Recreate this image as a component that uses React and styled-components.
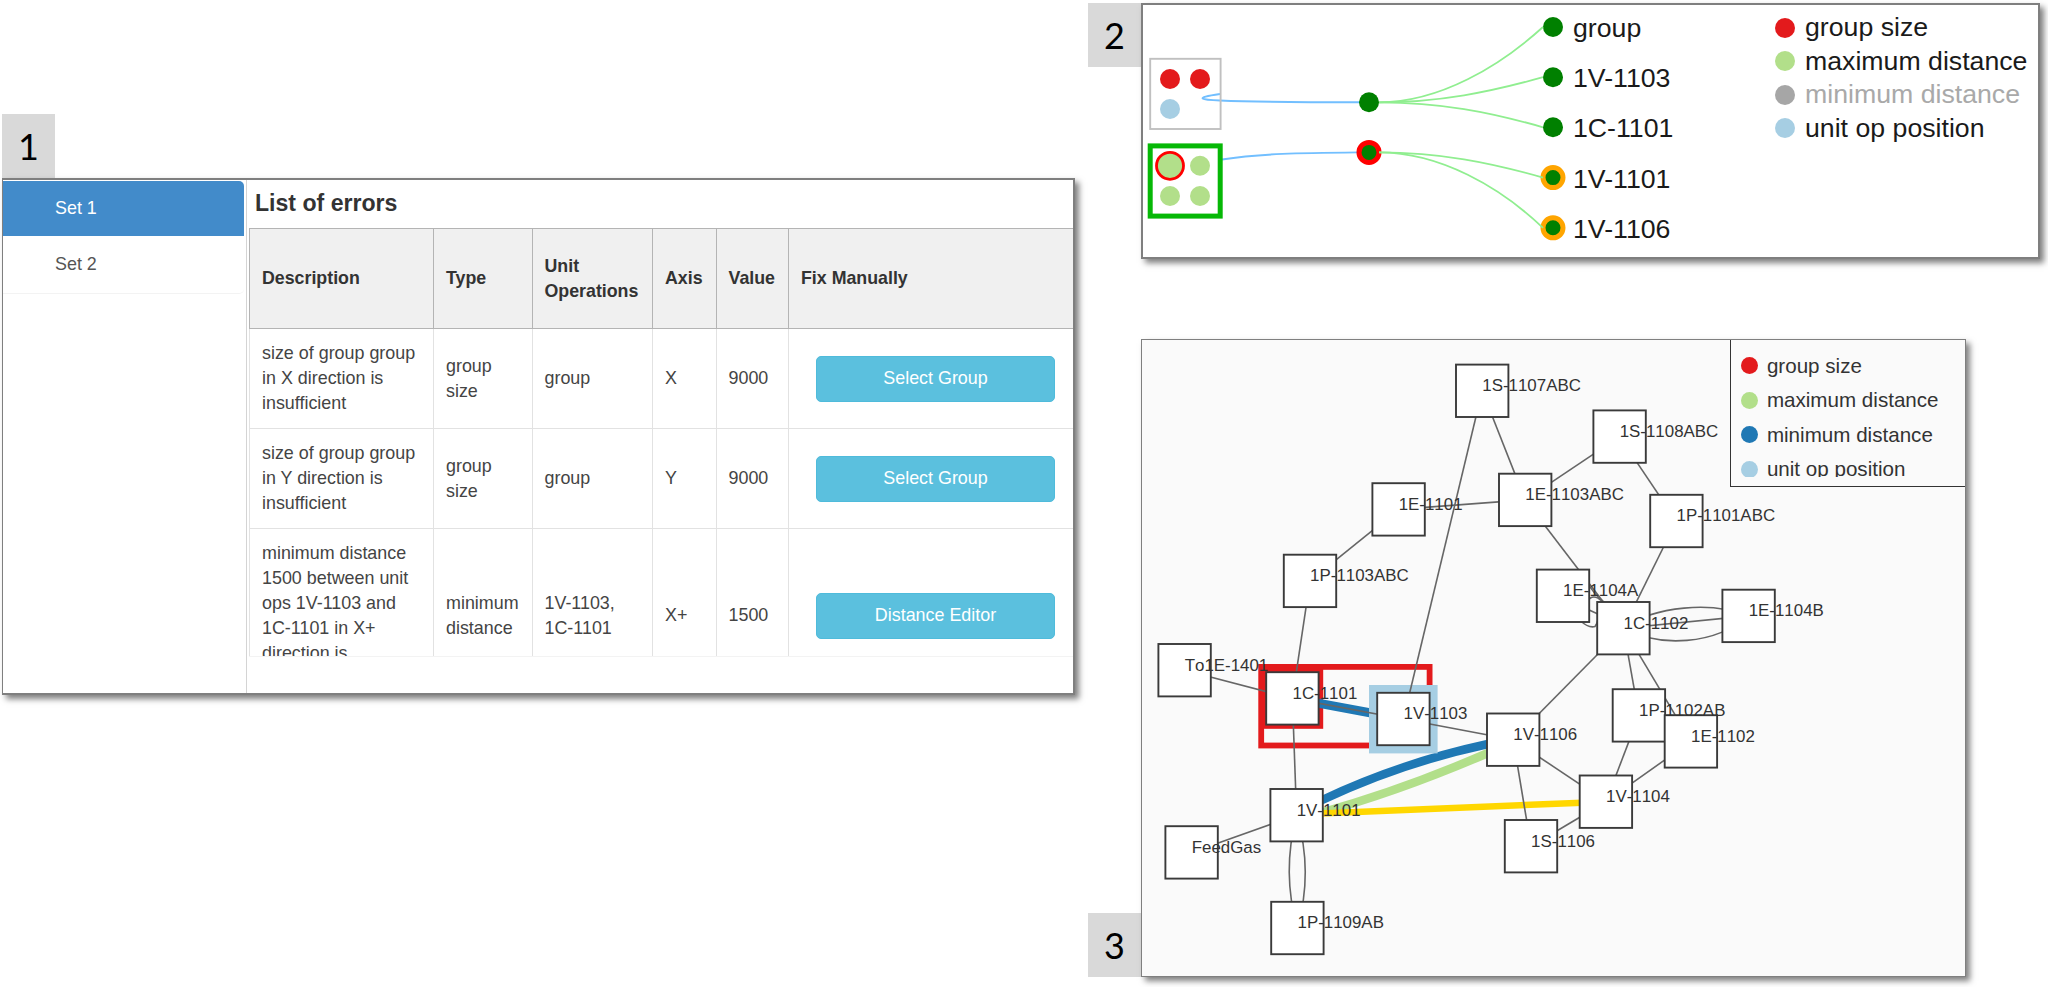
import React from "react";
import styled, { createGlobalStyle } from "styled-components";

const GlobalStyle = createGlobalStyle`
  * { box-sizing: border-box; }
  body {
    margin: 0;
    background: #fff;
    font-family: "Liberation Sans", Arial, sans-serif;
    overflow: hidden;
  }
`;

const Page = styled.div`
  display: flex;
  width: 2048px;
  height: 987px;
`;

const LeftColumn = styled.div`
  width: 1088px;
  padding: 114px 0 0 2px;
`;

const RightColumn = styled.div`
  flex: 1;
  padding-top: 3px;
  display: flex;
  flex-direction: column;
  gap: 80px;
`;

const Figure = styled.section`
  display: flex;
  align-items: ${(p) => p.$align || "flex-start"};
`;

const Tag = styled.div`
  width: 53px;
  height: 64px;
  flex: none;
  display: flex;
  align-items: center;
  justify-content: center;
  background: #d9d9d9;
  color: #000;
  font: 36px/1 Lato, sans-serif;
`;

const Panel = styled.div`
  width: ${(p) => p.$width}px;
  height: ${(p) => p.$height}px;
  border: ${(p) => p.$border || 2}px solid #7f7f7f;
  background: ${(p) => p.$background || "#fff"};
  box-shadow: 4px 4px 6px rgba(0, 0, 0, 0.5);
  display: flex;
  position: relative;
  overflow: hidden;
`;

const ErrorPanel = styled(Panel)`
  border-left-width: 1px;
`;

const SetList = styled.nav`
  width: 244px;
  border-right: 1px solid #d4d4d4;
  flex: none;
  padding-top: 1px;
`;

const SetItem = styled.div`
  width: 241px;
  height: ${(p) => (p.$active ? 55 : 58)}px;
  padding-left: 52px;
  display: flex;
  align-items: center;
  font-size: 17.9px;
  color: ${(p) => (p.$active ? "#fff" : "#555")};
  background: ${(p) => (p.$active ? "#428bca" : "#fff")};
  border-bottom: ${(p) => (p.$active ? "none" : "1px solid #f3f3f3")};
  border-radius: ${(p) => (p.$active ? "0 5px 0 0" : "0 0 5px 0")};
`;

const Errors = styled.div`
  flex: 1;
  padding-left: 2px;
`;

const Title = styled.h4`
  margin: 0;
  height: 48px;
  padding: 8px 0 0 6px;
  font-size: 23.1px;
  line-height: 30px;
  font-weight: bold;
  color: #333;
`;

const TableClip = styled.div`
  height: 429px;
  overflow: hidden;
  border-bottom: 1px solid #f3f3f3;
`;

const Table = styled.table`
  width: 826px;
  table-layout: fixed;
  border-collapse: collapse;
  font-size: 17.9px;
  line-height: 25px;
  color: #444;
`;

const HeadCell = styled.th`
  height: 100px;
  padding: 0 0 0 12px;
  border: 1px solid #b4b4b4;
  background: #f0f0f0;
  color: #333;
  font-size: 17.8px;
  text-align: left;
  white-space: pre-line;
`;

const Cell = styled.td`
  height: ${(p) => p.$height}px;
  padding: 0 0 0 12px;
  border: 1px solid #e2e2e2;
  white-space: pre-line;
`;

const FixButton = styled.button`
  display: block;
  width: 239px;
  height: 46px;
  margin-left: 15px;
  border: 1px solid #4fbbdb;
  border-radius: 5px;
  background: #5bc0de;
  color: #fff;
  font: 17.9px "Liberation Sans", Arial, sans-serif;
`;

const TreeLegend = styled.ul`
  list-style: none;
  margin: 0;
  padding: 6px 0 0;
`;

const LegendItem = styled.li`
  display: flex;
  align-items: center;
  height: ${(p) => p.$pitch}px;
  font-size: ${(p) => p.$size}px;
  color: ${(p) => p.$text};
  white-space: nowrap;
`;

const Dot = styled.span`
  flex: none;
  width: ${(p) => p.$size}px;
  height: ${(p) => p.$size}px;
  margin-right: ${(p) => p.$gap}px;
  border-radius: 50%;
  background: ${(p) => p.$color};
`;

const GraphLegend = styled.div`
  position: absolute;
  top: 0;
  right: 0;
  width: 235px;
  height: 147px;
  border-left: 1px solid #333;
  border-bottom: 1px solid #333;
  background: #fafafa;
`;

const GraphLegendList = styled.ul`
  list-style: none;
  margin: 0;
  padding: 8.5px 0 0 9.5px;
  height: 137px;
  overflow: hidden;
`;

const Drawing = styled.svg`
  display: block;
  flex: none;
  font-family: "Liberation Sans", Arial, sans-serif;
`;

const NodeLabels = styled.g`
  font-size: 16.9px;
  font-kerning: none;
  fill: #333;
`;

const COLUMNS = [184, 98.5, 120.5, 63.5, 72.5, 287];
const HEADERS = ["Description", "Type", "Unit\nOperations", "Axis", "Value", "Fix Manually"];
const ROWS = [
  { height: 100, cells: ["size of group group\nin X direction is\ninsufficient", "group\nsize", "group", "X", "9000"], action: "Select Group" },
  { height: 100, cells: ["size of group group\nin Y direction is\ninsufficient", "group\nsize", "group", "Y", "9000"], action: "Select Group" },
  {
    height: 174,
    cells: [
      "minimum distance\n1500 between unit\nops 1V-1103 and\n1C-1101 in X+\ndirection is\ninsufficient",
      "minimum\ndistance",
      "1V-1103,\n1C-1101",
      "X+",
      "1500",
    ],
    action: "Distance Editor",
  },
];

function ErrorTable() {
  return (
    <Table>
      <colgroup>
        {COLUMNS.map((w, i) => (
          <col key={i} width={w} />
        ))}
      </colgroup>
      <thead>
        <tr>
          {HEADERS.map((h) => (
            <HeadCell key={h}>{h}</HeadCell>
          ))}
        </tr>
      </thead>
      <tbody>
        {ROWS.map((row, i) => (
          <tr key={i}>
            {row.cells.map((c, j) => (
              <Cell key={j} $height={row.height}>{c}</Cell>
            ))}
            <Cell $height={row.height}>
              <FixButton>{row.action}</FixButton>
            </Cell>
          </tr>
        ))}
      </tbody>
    </Table>
  );
}

const LEAVES = [
  { y: 27, label: "group" },
  { y: 77.2, label: "1V-1103" },
  { y: 127.3, label: "1C-1101" },
  { y: 177.6, label: "1V-1101", ring: true },
  { y: 227.8, label: "1V-1106", ring: true },
];

const TREE_LINKS = [
  "M1379 102.3C1440 102.3 1500 66 1543 27",
  "M1379 102.3C1440 102.3 1490 92 1543 77.2",
  "M1379 102.3C1440 102.3 1490 112 1543 127.3",
  "M1379 152.4C1440 152.4 1490 162.5 1543 177.6",
  "M1379 152.4C1440 152.4 1500 187 1543 227.8",
];

function TreeDrawing() {
  return (
    <Drawing width="632" height="252" viewBox="1143 5 632 252">
      <g fill="none" stroke="#72bfff" strokeWidth="1.9">
        <path d="M1220 94C1192 98 1202 100 1220 100.5C1250 101.8 1300 102.3 1360 102.3" />
        <path d="M1222 159.5C1260 153.5 1300 153 1358 152.4" />
      </g>
      <rect x="1150.2" y="58.8" width="70.4" height="70.2" fill="none" stroke="#c0c0c0" strokeWidth="1.9" />
      <circle cx="1170" cy="79" r="10" fill="#e31a1c" />
      <circle cx="1200" cy="79" r="10" fill="#e31a1c" />
      <circle cx="1170" cy="109" r="10" fill="#a6cee3" />
      <rect x="1150.2" y="145.9" width="70" height="70.2" fill="none" stroke="#06b806" strokeWidth="5" />
      <circle cx="1170" cy="165.8" r="13.5" fill="#b2df8a" stroke="#f00" strokeWidth="2.8" />
      <circle cx="1200" cy="165.8" r="10" fill="#b2df8a" />
      <circle cx="1170" cy="196" r="10" fill="#b2df8a" />
      <circle cx="1200" cy="196" r="10" fill="#b2df8a" />
      <circle cx="1369" cy="102.3" r="10" fill="green" />
      <circle cx="1369" cy="152.4" r="10" fill="green" stroke="#f00" strokeWidth="5" />
      {LEAVES.map((n) => (
        <g key={n.label}>
          <circle cx="1553" cy={n.y} r="10" fill="green" stroke={n.ring ? "orange" : "none"} strokeWidth="5" />
          <text x="1573" y={n.y + 10} fontSize="26.7" fill="#1a1a1a">{n.label}</text>
        </g>
      ))}
      <g fill="none" stroke="#90ee90" strokeWidth="1.8">
        {TREE_LINKS.map((d) => (
          <path key={d} d={d} />
        ))}
      </g>
    </Drawing>
  );
}

const TREE_LEGEND = [
  { label: "group size", color: "#e31a1c", text: "#1a1a1a" },
  { label: "maximum distance", color: "#b2df8a", text: "#1a1a1a" },
  { label: "minimum distance", color: "#a6a6a6", text: "#a9a9a9" },
  { label: "unit op position", color: "#a6cee3", text: "#1a1a1a" },
];

const GRAPH_LEGEND = [
  { label: "group size", color: "#e31a1c" },
  { label: "maximum distance", color: "#b2df8a" },
  { label: "minimum distance", color: "#1f78b4" },
  { label: "unit op position", color: "#a6cee3" },
];

const NODES = {
  "1S-1107ABC": [1456, 364.6],
  "1S-1108ABC": [1593.4, 410.4],
  "1E-1103ABC": [1499, 473.7],
  "1E-1101": [1372.4, 483.2],
  "1P-1101ABC": [1650.2, 494.8],
  "1P-1103ABC": [1283.8, 554.7],
  "1E-1104A": [1536.8, 569.6],
  "1C-1102": [1597.2, 602],
  "1E-1104B": [1722.4, 589.7],
  "To1E-1401": [1158.4, 644],
  "1C-1101": [1266.2, 672.2],
  "1V-1103": [1377.2, 692.8],
  "1V-1106": [1487, 713.5],
  "1P-1102AB": [1612.7, 689.2],
  "1E-1102": [1664.7, 715.2],
  "1V-1104": [1579.7, 775.5],
  "1V-1101": [1270.4, 789],
  "1S-1106": [1504.8, 820],
  FeedGas: [1165.4, 826.2],
  "1P-1109AB": [1271.2, 901.8],
};
const SIZE = 52.4;

const LINKS = [
  ["1S-1107ABC", "1V-1103"],
  ["1S-1107ABC", "1E-1103ABC"],
  ["1E-1103ABC", "1S-1108ABC"],
  ["1S-1108ABC", "1P-1101ABC"],
  ["1P-1101ABC", "1C-1102"],
  ["1E-1103ABC", "1C-1102"],
  ["1E-1101", "1E-1103ABC"],
  ["1E-1101", "1P-1103ABC"],
  ["1P-1103ABC", "1C-1101"],
  ["To1E-1401", "1C-1101"],
  ["1C-1101", "1V-1103"],
  ["1C-1101", "1V-1101"],
  ["1V-1103", "1V-1106"],
  ["FeedGas", "1V-1101"],
  ["1C-1102", "1E-1104B"],
  ["1C-1102", "1V-1106"],
  ["1C-1102", "1P-1102AB"],
  ["1C-1102", "1E-1102"],
  ["1P-1102AB", "1V-1104"],
  ["1E-1102", "1V-1104"],
  ["1V-1106", "1V-1104"],
  ["1V-1106", "1S-1106"],
  ["1S-1106", "1V-1104"],
];

const ARCS = [
  "M1623 628C1655 606 1712 601 1748 616",
  "M1623 628C1660 648 1715 645 1748 616",
  "M1296.7 815Q1281.5 872 1297.3 928",
  "M1296.7 815Q1313.5 872 1297.3 928",
  "M1586 580Q1593 594 1606 604",
  "M1588 601Q1591 595 1598 598L1606 604",
  "M1588 609.5L1599 614.5",
  "M1580 620.5Q1589 628.5 1595 626.5Q1597 624 1598 620",
];

const center = (name) => NODES[name].map((v) => v + SIZE / 2);

function GraphDrawing() {
  return (
    <Drawing width="823" height="636" viewBox="1142 340 823 636">
      <rect x="1261.2" y="666.9" width="168.4" height="78.6" fill="none" stroke="#e31a1c" strokeWidth="5.8" />
      <rect x="1261" y="667" width="62.2" height="61.8" fill="#e31a1c" />
      <g fill="none">
        <path d="M1292.4 698.4L1403.4 719" stroke="#1f78b4" strokeWidth="9" />
        <path d="M1320 813Q1400 791 1488 753" stroke="#b2df8a" strokeWidth="8.5" />
        <path d="M1320 801Q1400 763 1488 744" stroke="#1f78b4" strokeWidth="8.5" />
        <path d="M1320 813.5L1582 802.7" stroke="#ffd700" strokeWidth="6.5" />
      </g>
      <rect x="1369" y="685" width="68.6" height="68.4" fill="#a6cee3" />
      <g fill="none" stroke="#666" strokeWidth="1.6">
        {LINKS.map(([a, b]) => {
          const [x1, y1] = center(a);
          const [x2, y2] = center(b);
          return <line key={a + b} x1={x1} y1={y1} x2={x2} y2={y2} />;
        })}
        {ARCS.map((d) => (
          <path key={d} d={d} />
        ))}
      </g>
      {Object.entries(NODES).map(([name, [x, y]]) => (
        <rect key={name} x={x} y={y} width={SIZE} height={SIZE} fill="#fff" stroke="#3a3a3a" strokeWidth="1.9" />
      ))}
      <NodeLabels>
        {Object.entries(NODES).map(([name, [x, y]]) => (
          <text key={name} x={x + 26.3} y={y + 26.6}>{name}</text>
        ))}
      </NodeLabels>
    </Drawing>
  );
}

export default function App() {
  return (
    <>
      <GlobalStyle />
      <Page>
        <LeftColumn>
          <Tag>1</Tag>
          <ErrorPanel $width={1073} $height={517}>
            <SetList>
              <SetItem $active>Set 1</SetItem>
              <SetItem>Set 2</SetItem>
            </SetList>
            <Errors>
              <Title>List of errors</Title>
              <TableClip>
                <ErrorTable />
              </TableClip>
            </Errors>
          </ErrorPanel>
        </LeftColumn>
        <RightColumn>
          <Figure>
            <Tag>2</Tag>
            <Panel $width={899} $height={256}>
              <TreeDrawing />
              <TreeLegend>
                {TREE_LEGEND.map((l) => (
                  <LegendItem key={l.label} $pitch={33.5} $size={26.7} $text={l.text}>
                    <Dot $size={20} $gap={10} $color={l.color} />
                    {l.label}
                  </LegendItem>
                ))}
              </TreeLegend>
            </Panel>
          </Figure>
          <Figure $align="flex-end">
            <Tag>3</Tag>
            <Panel $width={825} $height={638} $border={1} $background="#fafafa">
              <GraphDrawing />
              <GraphLegend>
                <GraphLegendList>
                  {GRAPH_LEGEND.map((l) => (
                    <LegendItem key={l.label} $pitch={34.5} $size={20.6} $text="#333">
                      <Dot $size={17.4} $gap={9} $color={l.color} />
                      {l.label}
                    </LegendItem>
                  ))}
                </GraphLegendList>
              </GraphLegend>
            </Panel>
          </Figure>
        </RightColumn>
      </Page>
    </>
  );
}
